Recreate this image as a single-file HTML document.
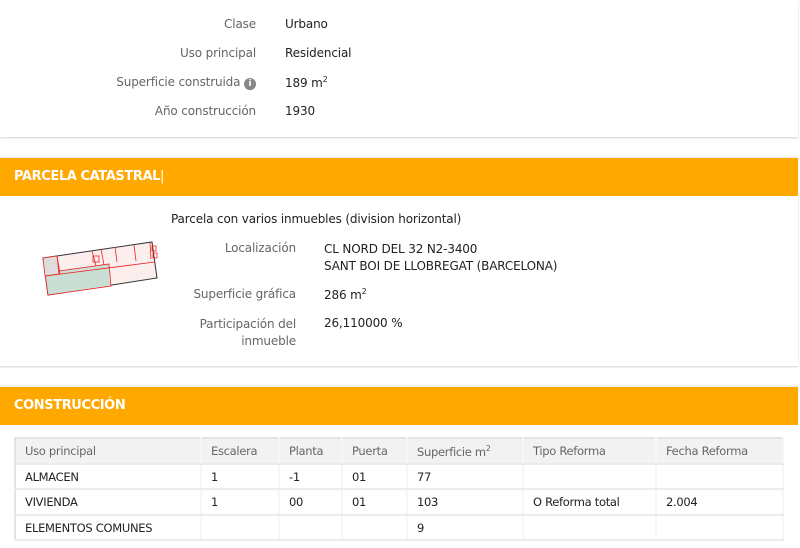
<!DOCTYPE html>
<html><head><meta charset="utf-8"><style>
*{margin:0;padding:0;box-sizing:border-box}
body{width:800px;height:548px;overflow:hidden;background:#fff;font-family:"DejaVu Sans","Liberation Sans",sans-serif;font-size:12px;letter-spacing:-0.15px;color:#222;position:relative}
.abs{position:absolute;white-space:nowrap}
.lbl{color:#666;text-align:right}
.card{position:absolute;left:0;width:798px;background:#fff;box-shadow:0 1px 2px rgba(0,0,0,.18)}
.bar{position:absolute;left:0;width:798px;background:#ffa800;color:#fff;font-weight:bold;font-size:13px;letter-spacing:-0.4px;padding-left:14px;box-shadow:0 -1px 2px rgba(0,0,0,.12)}
sup{font-size:8px;vertical-align:5px}
table{border-collapse:collapse;position:absolute;left:14px;top:437px;width:770px;border:2px solid #e4e4e4;font-family:"DejaVu Sans",sans-serif;font-size:11.5px;letter-spacing:-0.3px}
td,th{height:25.5px;padding-left:9px;padding-top:1px;text-align:left;font-weight:normal;border-bottom:2px solid #ececec;border-right:2px solid #f6f6f6}
th{background:#f2f2f2;color:#666}
</style></head><body>
<div class="card" style="top:0;height:137px"></div>
<div class="abs lbl" style="right:544px;top:17px">Clase</div>
<div class="abs" style="left:285px;top:17px">Urbano</div>
<div class="abs lbl" style="right:544px;top:46px">Uso principal</div>
<div class="abs" style="left:285px;top:46px">Residencial</div>
<div class="abs lbl" style="right:544px;top:75px">Superficie construida <span style="display:inline-block;width:12px;height:12px;border-radius:6px;background:#888;color:#fff;font-size:9px;text-align:center;line-height:12px;font-weight:bold;border-bottom:1px dotted #666">i</span></div>
<div class="abs" style="left:285px;top:75px">189 m<sup>2</sup></div>
<div class="abs lbl" style="right:544px;top:104px">Año construcción</div>
<div class="abs" style="left:285px;top:104px">1930</div>

<div class="bar" style="top:158px;height:38px;line-height:38px">PARCELA CATASTRAL<span style="font-weight:normal">|</span></div>
<div class="card" style="top:196px;height:170px"></div>
<div class="abs" style="left:171px;top:212px">Parcela con varios inmuebles (division horizontal)</div>
<svg class="abs" style="left:40px;top:238px" width="120" height="60" viewBox="40 238 120 60">
<polygon points="43,258 152,242 157,278 48,295" fill="#fdeeee" stroke="#333" stroke-width="1"/>
<polygon points="45,273 109,264 111,286 48,295" fill="#c9dfd6" stroke="#e22" stroke-width="0.8"/>
<polygon points="43,258 57,256 59,274 45,276" fill="#ddd" stroke="#e22" stroke-width="0.8"/>
<g stroke="#e22" stroke-width="0.8" fill="none">
<line x1="57" y1="256" x2="60" y2="274"/><line x1="45" y1="276" x2="155" y2="262"/>
<line x1="92" y1="251" x2="96" y2="266"/><line x1="101" y1="249" x2="104" y2="265"/>
<line x1="115" y1="247" x2="117" y2="262"/><line x1="134" y1="245" x2="136" y2="261"/>
<line x1="150" y1="243" x2="151" y2="259"/><rect x="93" y="256" width="6" height="6"/>
<rect x="152" y="246" width="4" height="5"/><rect x="153" y="253" width="4" height="5"/>
</g></svg>
<div class="abs lbl" style="right:504px;top:241px">Localización</div>
<div class="abs" style="left:324px;top:241px;line-height:17px">CL NORD DEL 32 N2-3400<br>SANT BOI DE LLOBREGAT (BARCELONA)</div>
<div class="abs lbl" style="right:504px;top:287px">Superficie gráfica</div>
<div class="abs" style="left:324px;top:287px">286 m<sup>2</sup></div>
<div class="abs lbl" style="right:504px;top:316px;line-height:17px">Participación del<br>inmueble</div>
<div class="abs" style="left:324px;top:316px">26,110000 %</div>

<div class="bar" style="top:387px;height:38px;line-height:38px">CONSTRUCCIÓN</div>
<table>
<tr><th style="width:186px">Uso principal</th><th style="width:78px">Escalera</th><th style="width:63px">Planta</th><th style="width:65px">Puerta</th><th style="width:116px">Superficie m<sup>2</sup></th><th style="width:133px">Tipo Reforma</th><th>Fecha Reforma</th></tr>
<tr><td>ALMACEN</td><td>1</td><td>-1</td><td>01</td><td>77</td><td></td><td></td></tr>
<tr><td>VIVIENDA</td><td>1</td><td>00</td><td>01</td><td>103</td><td>O Reforma total</td><td>2.004</td></tr>
<tr><td>ELEMENTOS COMUNES</td><td></td><td></td><td></td><td>9</td><td></td><td></td></tr>
</table>
</body></html>
